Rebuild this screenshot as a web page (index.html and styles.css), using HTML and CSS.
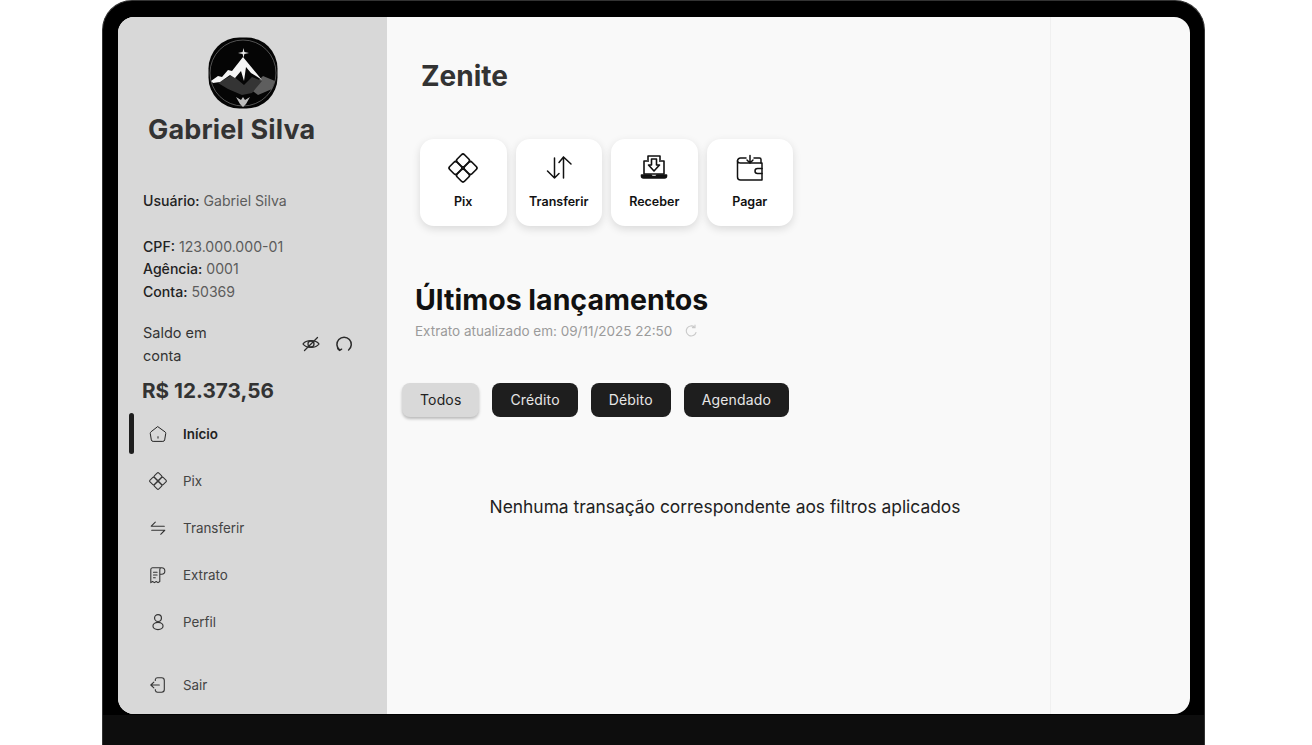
FILE: index.html
```html
<!DOCTYPE html>
<html lang="pt-BR">
<head>
  <meta charset="UTF-8" />
  <title>Zenite</title>
  <link rel="stylesheet" href="styles.css">
</head>
<body>

<div class="laptop">
  <div class="screen">

    <!-- Sidebar -->
    <aside class="sidebar">
      <div class="logo">
        <svg width="70" height="72" viewBox="0 0 70 72">
          <rect x="0.5" y="0.5" width="69" height="71" rx="31" fill="#050505"/>
          <circle cx="35" cy="36" r="33" fill="none" stroke="#8a8a8a" stroke-width="0.6"/>
          <path d="M42 52 L55 39 L67 44 L64 52 L50 58 Z" fill="#5e5e5e"/>
          <path d="M10 46 L24 38 L36 48 L44 40 L54 44 L44 56 L34 58 L20 52 Z" fill="#343434"/>
          <path d="M3 44 L10 39 L14 40 L20 33 L24 34 L35 20 L54 43 L48 39 L43 36 L38 30 L36 44 L33 34 L27 41 L22 38 L12 45 L5 46 Z" fill="#f4f4f4"/>
          <path d="M35.5 11 L36.4 15 L41 16 L36.4 17 L35.5 21 L34.6 17 L30 16 L34.6 15 Z" fill="#e8e8e8"/>
          <path d="M28 60 L33 63 L35 60 L37 63 L42 60 L38 67 L35 70 L32 67 Z" fill="#bdbdbd"/>
        </svg>
      </div>
      <h2 class="user-name">Gabriel Silva</h2>

      <p class="info info-user"><b>Usuário:</b> Gabriel Silva</p>
      <div class="info-group">
        <p class="info"><b>CPF:</b> 123.000.000-01</p>
        <p class="info"><b>Agência:</b> 0001</p>
        <p class="info"><b>Conta:</b> 50369</p>
      </div>

      <div class="balance-row">
        <span class="balance-label">Saldo em conta</span>
        <div class="balance-icons">
          <svg width="20" height="20" viewBox="0 0 20 20" fill="none" stroke="#2b2b2b" stroke-width="1.3" stroke-linecap="round">
            <path d="M2 10 C5 5.5 15 5.5 18 10 C15 14.5 5 14.5 2 10 Z"/>
            <circle cx="10" cy="10" r="3"/>
            <path d="M16.5 3.5 L3.5 16.5"/>
          </svg>
          <svg width="20" height="20" viewBox="0 0 20 20" fill="none" stroke="#2b2b2b" stroke-width="1.5" stroke-linecap="round">
            <path d="M5.6 16 A7.2 7.2 0 1 1 14.6 16"/>
            <path d="M3.8 14.6 L5.6 16.4 L7.6 15.2"/>
          </svg>
        </div>
      </div>
      <div class="balance-value">R$ 12.373,56</div>

      <nav class="nav">
        <a class="nav-item active">
          <svg width="18" height="18" viewBox="0 0 20 20" fill="none" stroke="#222" stroke-width="1.1" stroke-linejoin="round" stroke-linecap="round">
            <path d="M10 2 L18 7.8 A2 2 0 0 1 18.6 9.4 L17.4 16.6 A2 2 0 0 1 15.4 18.2 H4.6 A2 2 0 0 1 2.6 16.6 L1.4 9.4 A2 2 0 0 1 2 7.8 Z"/>
            <path d="M10 13 V14.6"/>
          </svg>
          <span>Início</span>
        </a>
        <a class="nav-item">
          <svg width="18" height="18" viewBox="0 0 28 28" fill="none" stroke="#333" stroke-width="1.6">
            <rect x="9.2" y="2.2" width="9.6" height="9.6" rx="2" transform="rotate(45 14 7)"/>
            <rect x="9.2" y="16.2" width="9.6" height="9.6" rx="2" transform="rotate(45 14 21)"/>
            <rect x="2.2" y="9.2" width="9.6" height="9.6" rx="2" transform="rotate(45 7 14)"/>
            <rect x="16.2" y="9.2" width="9.6" height="9.6" rx="2" transform="rotate(45 21 14)"/>
          </svg>
          <span>Pix</span>
        </a>
        <a class="nav-item">
          <svg width="18" height="18" viewBox="0 0 20 20" fill="none" stroke="#333" stroke-width="1.2" stroke-linecap="round">
            <path d="M2.5 8 H17 M2.5 8 L7 3.5"/>
            <path d="M17.5 12.5 H3 M17.5 12.5 L13 17"/>
          </svg>
          <span>Transferir</span>
        </a>
        <a class="nav-item">
          <svg width="18" height="18" viewBox="0 0 20 20" fill="none" stroke="#333" stroke-width="1.2" stroke-linecap="round" stroke-linejoin="round">
            <path d="M14 2 H4 A2 2 0 0 0 2 4 V18.5 L4 17.2 L6 18.5 L8 17.2 L10 18.5 L12 17.2 V4 A2 2 0 0 1 14 2 A3.4 3.4 0 0 1 14 9.2 H12"/>
            <path d="M5 7 H9 M5 10 H9 M5 13 H7"/>
          </svg>
          <span>Extrato</span>
        </a>
        <a class="nav-item">
          <svg width="18" height="18" viewBox="0 0 20 20" fill="none" stroke="#333" stroke-width="1.3">
            <circle cx="10" cy="5.6" r="3.8"/>
            <ellipse cx="10" cy="14.4" rx="5.6" ry="4"/>
          </svg>
          <span>Perfil</span>
        </a>
        <a class="nav-item nav-exit">
          <svg width="18" height="18" viewBox="0 0 20 20" fill="none" stroke="#333" stroke-width="1.2" stroke-linecap="round" stroke-linejoin="round">
            <path d="M7 5 V4 A2.6 2.6 0 0 1 9.6 2 H14 A3 3 0 0 1 17 5 V15 A3 3 0 0 1 14 18 H9.6 A2.6 2.6 0 0 1 7 16 V15"/>
            <path d="M11.5 10 H2 M2 10 L5.4 6.8 M2 10 L5.4 13.2"/>
          </svg>
          <span>Sair</span>
        </a>
      </nav>
    </aside>

    <!-- Main content -->
    <main class="main">
      <h1 class="brand">Zenite</h1>

      <div class="actions">
        <div class="action-card">
          <svg width="30" height="30" viewBox="0 0 28 28" fill="none" stroke="#111" stroke-width="1.6">
            <rect x="9.2" y="2.2" width="9.6" height="9.6" rx="2" transform="rotate(45 14 7)"/>
            <rect x="9.2" y="16.2" width="9.6" height="9.6" rx="2" transform="rotate(45 14 21)"/>
            <rect x="2.2" y="9.2" width="9.6" height="9.6" rx="2" transform="rotate(45 7 14)"/>
            <rect x="16.2" y="9.2" width="9.6" height="9.6" rx="2" transform="rotate(45 21 14)"/>
          </svg>
          <span>Pix</span>
        </div>
        <div class="action-card">
          <svg width="30" height="30" viewBox="0 0 30 30" fill="none" stroke="#111" stroke-width="1.5" stroke-linecap="round" stroke-linejoin="round">
            <path d="M10.5 5 V25 M3.5 18 L10.5 25 L15 20.5"/>
            <path d="M19.5 25 V4 M15 9.5 L19.5 4 L27 11"/>
          </svg>
          <span>Transferir</span>
        </div>
        <div class="action-card">
          <svg width="30" height="30" viewBox="0 0 30 30" fill="none" stroke="#111" stroke-width="1.6" stroke-linejoin="round">
            <path d="M9 7 V3 H21 V7"/>
            <path d="M10 8 H5 V21 H25 V8 H20"/>
            <path d="M12.5 6 H17.5 V12 H20.5 L15 18 L9.5 12 H12.5 Z"/>
            <path d="M2.5 22 H12 L13 23.5 H17 L18 22 H27.5 V23 A2 2 0 0 1 25.5 25 H4.5 A2 2 0 0 1 2.5 23 Z" fill="#111"/>
          </svg>
          <span>Receber</span>
        </div>
        <div class="action-card">
          <svg width="30" height="30" viewBox="0 0 30 30" fill="none" stroke="#111" stroke-width="1.5" stroke-linejoin="round" stroke-linecap="round">
            <path d="M2.5 8 A3 3 0 0 1 5.5 5 H11 M19 5 H24.5 A1.5 1.5 0 0 1 26 6.5 V10"/>
            <path d="M15 2.5 V9.5 M12 7 L15 10 L18 7"/>
            <path d="M2.5 8 V24 A3 3 0 0 0 5.5 27 H27 V10 H5.5 A3 3 0 0 1 2.5 8"/>
            <path d="M27 15.5 H22.5 A2.5 2.5 0 0 0 22.5 20.5 H27"/>
          </svg>
          <span>Pagar</span>
        </div>
      </div>

      <h2 class="section-title">Últimos lançamentos</h2>
      <p class="updated">
        Extrato atualizado em: 09/11/2025 22:50
        <svg width="14" height="14" viewBox="0 0 14 14" fill="none" stroke="#c9c9c9" stroke-width="1.1" stroke-linecap="round">
          <path d="M12 8.5 A5 5 0 1 1 10.6 3.2"/>
          <path d="M11 1 V3.6 H8.4"/>
        </svg>
      </p>

      <div class="filters">
        <button class="filter selected">Todos</button>
        <button class="filter">Crédito</button>
        <button class="filter">Débito</button>
        <button class="filter">Agendado</button>
      </div>

      <p class="empty">Nenhuma transação correspondente aos filtros aplicados</p>
    </main>

    <div class="right-panel"></div>
  </div>
</div>

</body>
</html>
```

FILE: styles.css
```css
body {
  margin: 0;
  height: 745px;
  overflow: hidden;
  background: #fff;
  font-family: 'Inter', sans-serif;
  color: #222;
}

p, h1, h2 {
  margin: 0;
}

.laptop {
  width: 1103px;
  height: 745px;
  margin-left: 102px;
  box-sizing: border-box;
  padding: 16px 14px 31px 15px;
  background: linear-gradient(#000 714px, #0d0d0d 714px);
  border: 1px solid #333;
  border-bottom: none;
  border-radius: 30px 30px 0 0;
}

.screen {
  display: flex;
  height: 697px;
  border-radius: 16px;
  overflow: hidden;
  background: #f9f9f9;
}

/* Sidebar */
.sidebar {
  width: 269px;
  flex-shrink: 0;
  box-sizing: border-box;
  display: flex;
  flex-direction: column;
  padding: 20px 0 0 25px;
  background: #d8d8d8;
}

.logo {
  height: 72px;
  margin-left: 65px;
}

.user-name {
  margin-top: 5px;
  margin-left: 5px;
  font-size: 27px;
  line-height: 32px;
  letter-spacing: 0.15px;
  font-weight: 700;
  color: #333;
}

.info {
  font-size: 14.1px;
  line-height: 22.5px;
  color: #5c5c5c;
}

.info b {
  font-weight: 500;
  color: #222;
}

.info-user {
  margin-top: 44px;
}

.info-group {
  margin-top: 23px;
}

.balance-row {
  display: flex;
  align-items: center;
  margin-top: 18px;
}

.balance-label {
  width: 90px;
  font-size: 14.5px;
  line-height: 23px;
  color: #333;
}

.balance-icons {
  display: flex;
  gap: 13px;
  margin-left: 68px;
}

.balance-value {
  margin: 10px 0 0 -1px;
  font-size: 20.7px;
  line-height: 27px;
  font-weight: 700;
  color: #333;
}

.nav {
  display: flex;
  flex-direction: column;
  gap: 15px;
  margin-top: 14px;
  flex: 1;
}

.nav-item {
  position: relative;
  display: flex;
  align-items: center;
  gap: 16px;
  height: 32px;
  padding-left: 6px;
  font-size: 13.4px;
  color: #444;
}

.nav-item.active {
  font-weight: 600;
  color: #222;
}

.nav-item.active::before {
  content: "";
  position: absolute;
  left: -14px;
  top: -5px;
  width: 5px;
  height: 41px;
  border-radius: 3px;
  background: #1e1e1e;
}

.nav-exit {
  margin-top: 16px;
}

/* Main */
.main {
  flex: 1;
  box-sizing: border-box;
  padding: 43px 15px 0 28px;
}

.brand {
  margin-left: 6px;
  font-size: 28px;
  line-height: 32px;
  font-weight: 700;
  color: #333;
}

.actions {
  display: flex;
  gap: 9px;
  margin: 47px 0 0 5px;
}

.action-card {
  width: 86.5px;
  height: 87px;
  display: flex;
  flex-direction: column;
  align-items: center;
  box-sizing: border-box;
  padding-top: 14px;
  background: #fff;
  border-radius: 14px;
  box-shadow: 0 3px 8px rgba(0,0,0,0.13);
}

.action-card span {
  margin-top: 11px;
  font-size: 12.5px;
  font-weight: 600;
  color: #111;
}

.section-title {
  margin-top: 56px;
  font-size: 28.5px;
  line-height: 36px;
  font-weight: 700;
  color: #111;
}

.updated {
  display: flex;
  align-items: center;
  gap: 12px;
  margin-top: 2px;
  font-size: 13.5px;
  line-height: 22px;
  color: #9b9b9b;
}

.filters {
  display: flex;
  gap: 13px;
  margin: 41px 0 0 -13px;
}

.filter {
  height: 34px;
  padding: 0 18px 2px;
  border: none;
  border-radius: 8px;
  background: #1e1e1e;
  color: #e6e6e6;
  font-family: 'Inter', sans-serif;
  font-size: 14px;
  letter-spacing: 0.15px;
}

.filter.selected {
  background: #d9d9d9;
  color: #222;
  box-shadow: 0 2px 3px rgba(0,0,0,0.25);
}

.empty {
  margin-top: 78px;
  text-align: center;
  font-size: 17.4px;
  line-height: 24px;
  color: #222;
}

.right-panel {
  width: 139px;
  flex-shrink: 0;
  border-left: 1px solid #f0f0f0;
}
```
